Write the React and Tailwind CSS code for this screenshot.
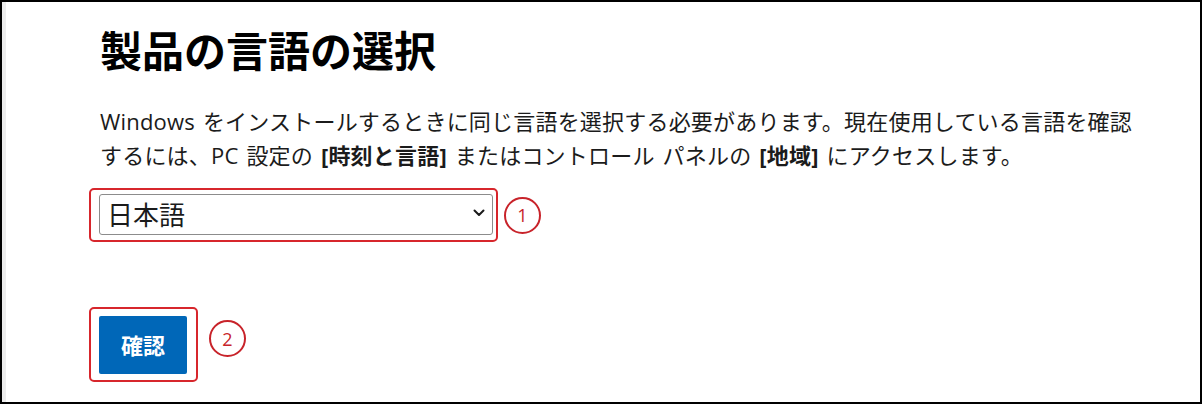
import React from 'react';

const font = { fontFamily: '"Open Sans", "Noto Sans CJK JP", sans-serif' };

const StepBadge = ({ n, className }) => (
  <div
    className={`flex h-[37px] w-[37px] items-center justify-center rounded-full border-2 border-[#c8232a] text-[18px] leading-none text-[#c8232a] ${className}`}
  >
    {n}
  </div>
);

export default function App() {
  return (
    <div
      className="relative h-[404px] w-[1202px] overflow-hidden border-2 border-black bg-white text-[#1b1b1b]"
      style={font}
    >
      <div className="absolute left-0 top-0 bottom-0 w-[4px] bg-[#ececec]" />

      <div className="pl-[98px] pt-[23px]">
        <h1 className="text-[42px] font-bold leading-[52px] text-black">製品の言語の選択</h1>

        <p className="mt-[27px] text-[22px] leading-[34px] tracking-[0.2px] [word-spacing:2px]">
          Windows をインストールするときに同じ言語を選択する必要があります。現在使用している言語を確認
          <br />
          するには、PC 設定の <b>[時刻と言語]</b> またはコントロール パネルの <b>[地域]</b> にアクセスします。
        </p>

        <div className="mt-[16px] flex items-center">
          <div className="-ml-[11px] rounded-[5px] border-2 border-[#d7262c] pb-[5px] pl-[8px] pr-[3px] pt-[4px]">
            <div className="relative h-[41px] w-[394px]">
              <select
                defaultValue="ja"
                className="h-full w-full appearance-none rounded-[3px] border border-[#8c8c8c] bg-white pl-[7px] text-[26px] leading-none text-[#1b1b1b] outline-none"
                style={font}
              >
                <option value="ja">日本語</option>
              </select>
              <svg
                className="pointer-events-none absolute right-[8px] top-[15px]"
                width="12"
                height="8"
                viewBox="0 0 12 8"
                fill="none"
              >
                <path d="M1.5 1.5L6 6L10.5 1.5" stroke="#1b1b1b" strokeWidth="2" strokeLinecap="round" strokeLinejoin="round" />
              </svg>
            </div>
          </div>
          <StepBadge n="1" className="ml-[6px]" />
        </div>

        <div className="mt-[65px] flex items-start">
          <div className="-ml-[11px] rounded-[5px] border-2 border-[#d7262c] pb-[6px] pl-[8px] pr-[9px] pt-[7px]">
            <button className="h-[58px] w-[88px] rounded-[2px] bg-[#0067b8] text-[22px] font-bold text-white">
              確認
            </button>
          </div>
          <StepBadge n="2" className="ml-[11px] mt-[13px]" />
        </div>
      </div>
    </div>
  );
}
